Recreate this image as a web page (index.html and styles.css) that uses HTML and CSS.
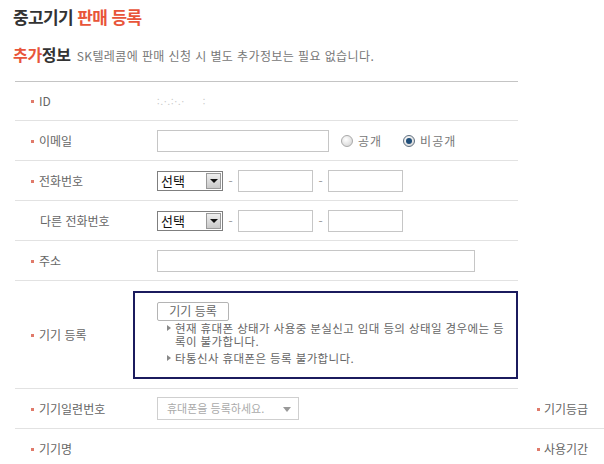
FILE: index.html
```html
<!DOCTYPE html>
<html lang="ko">
<head>
  <meta charset="UTF-8" />
  <title>중고기기 판매 등록</title>
  <link rel="stylesheet" href="styles.css">
</head>
<body>
  <div class="page">
    <h2 class="title">중고기기 <span class="hl">판매 등록</span></h2>
    <div class="sub">
      <h3><span class="hl">추가</span>정보</h3>
      <span class="note">SK텔레콤에 판매 신청 시 별도 추가정보는 필요 없습니다.</span>
    </div>

    <div class="form">
      <div class="row">
        <div class="label req">ID</div>
        <div class="value"><span class="masked">:.·.:·.·&nbsp;&nbsp;&nbsp;&nbsp;&nbsp;:</span></div>
      </div>
      <div class="row">
        <div class="label req">이메일</div>
        <div class="value">
          <span class="input w-email"></span>
          <span class="radio"></span><span class="radio-text">공개</span>
          <span class="radio on"></span><span class="radio-text">비공개</span>
        </div>
      </div>
      <div class="row">
        <div class="label req">전화번호</div>
        <div class="value">
          <span class="select">선택<span class="arrow"></span></span>
          <span class="dash">-</span>
          <span class="input w-tel"></span>
          <span class="dash">-</span>
          <span class="input w-tel"></span>
        </div>
      </div>
      <div class="row">
        <div class="label">다른 전화번호</div>
        <div class="value">
          <span class="select">선택<span class="arrow"></span></span>
          <span class="dash">-</span>
          <span class="input w-tel"></span>
          <span class="dash">-</span>
          <span class="input w-tel"></span>
        </div>
      </div>
      <div class="row">
        <div class="label req">주소</div>
        <div class="value"><span class="input w-addr"></span></div>
      </div>
      <div class="row row-device">
        <div class="label req">기기 등록</div>
        <div class="device-box">
          <button class="btn">기기 등록</button>
          <ul class="notice">
            <li>현재 휴대폰 상태가 사용중 분실신고 임대 등의 상태일 경우에는 등록이 불가합니다.</li>
            <li>타통신사 휴대폰은 등록 불가합니다.</li>
          </ul>
        </div>
      </div>
    </div>

    <div class="form wide">
      <div class="row">
        <div class="label req">기기일련번호</div>
        <div class="value grow">
          <span class="combo">휴대폰을 등록하세요.<span class="tri"></span></span>
        </div>
        <div class="label req side">기기등급</div>
      </div>
      <div class="row">
        <div class="label req">기기명</div>
        <div class="value grow"></div>
        <div class="label req side">사용기간</div>
      </div>
    </div>
  </div>
</body>
</html>
```

FILE: styles.css
```css
html, body {
  margin: 0;
  background: #fff;
  overflow: hidden;
}
body {
  font-family: "Noto Sans CJK KR", "Noto Sans", sans-serif;
  font-size: 12px;
  color: #666;
}
.page {
  padding: 5px 0 0 13px;
}
.hl { color: #e8553a; }

.title {
  margin: 0;
  font-size: 17px;
  line-height: 24px;
  font-weight: bold;
  color: #333;
  letter-spacing: -0.6px;
}
.sub {
  margin-top: 14px;
  display: flex;
  align-items: baseline;
  gap: 6px;
}
.sub h3 {
  margin: 0;
  font-size: 16px;
  line-height: 22px;
  font-weight: bold;
  color: #333;
  letter-spacing: -0.3px;
}
.note {
  font-size: 12px;
  color: #777;
  letter-spacing: 0.4px;
}

.form {
  margin: 16px 0 0 2px;
  width: 503px;
  border-top: 1px solid #c4c4c4;
}
.form.wide {
  margin-top: 0;
  width: auto;
  border-top: none;
}
.row {
  display: flex;
  align-items: center;
  height: 40px;
  border-bottom: 1px solid #e2e2e2;
  box-sizing: border-box;
}
.form .row:first-child { height: 39px; }
.form.wide .row:first-child { height: 40px; }

.label {
  width: 142px;
  flex: none;
  box-sizing: border-box;
  padding-left: 25px;
  color: #666;
  line-height: 16px;
  white-space: nowrap;
}
.label.req {
  position: relative;
  padding-left: 24px;
}
.label.req::before {
  content: "";
  position: absolute;
  left: 16px;
  top: 7px;
  width: 3px;
  height: 3px;
  background: #e07a6a;
}
.label.side {
  width: 67px;
  padding-left: 7px;
}
.label.side::before { left: 0; }

.value {
  display: flex;
  align-items: center;
}
.value.grow { flex: 1; }
.masked {
  font-size: 9px;
  color: #c8c8c8;
  letter-spacing: 1px;
}

.input {
  display: inline-block;
  height: 22px;
  box-sizing: border-box;
  border: 1px solid #c6c6c6;
  background: #fff;
}
.w-email { width: 172px; }
.w-tel { width: 75px; }
.w-addr { width: 318px; }

.radio {
  width: 12px;
  height: 12px;
  border-radius: 50%;
  box-sizing: border-box;
  border: 1px solid #a9a9a9;
  background: radial-gradient(circle at 40% 35%, #fff, #cfcfcf);
  margin-left: 12px;
  position: relative;
}
.radio.on {
  margin-left: 21px;
  border-color: #5f6f80;
}
.radio.on::after {
  content: "";
  position: absolute;
  left: 2px;
  top: 2px;
  width: 6px;
  height: 6px;
  border-radius: 50%;
  background: #1f4e79;
}
.radio-text {
  margin-left: 5px;
  color: #777;
  letter-spacing: 1px;
}

.select {
  position: relative;
  width: 66px;
  height: 20px;
  box-sizing: border-box;
  border: 1px solid #7f7f7f;
  padding-left: 3px;
  font-size: 13px;
  line-height: 18px;
  color: #111;
}
.select .arrow {
  position: absolute;
  right: 1px;
  top: 1px;
  width: 15px;
  height: 16px;
  box-sizing: border-box;
  border: 1px solid #999;
  background: linear-gradient(#eee, #c9c9c9);
}
.select .arrow::after {
  content: "";
  position: absolute;
  left: 3px;
  top: 5px;
  border-left: 4px solid transparent;
  border-right: 4px solid transparent;
  border-top: 4px solid #111;
}
.dash {
  width: 15px;
  text-align: center;
  color: #999;
}

.row-device {
  height: 108px;
}
.row-device .label {
  width: 118px;
}
.device-box {
  width: 386px;
  height: 88px;
  box-sizing: border-box;
  border: 2px solid #1b1b5e;
  padding: 9px 4px 0 22px;
}
.btn {
  display: block;
  width: 72px;
  height: 19px;
  padding: 0;
  border: 1px solid #b4b4b4;
  border-radius: 2px;
  background: #fff;
  font-family: inherit;
  font-size: 12px;
  line-height: 16px;
  color: #666;
}
.notice {
  list-style: none;
  margin: 1px 0 0;
  padding: 0 0 0 18px;
  font-size: 11.5px;
  line-height: 13px;
  color: #666;
}
.notice li {
  position: relative;
  margin-bottom: 4px;
  letter-spacing: 0.4px;
}
.notice li::before {
  content: "";
  position: absolute;
  left: -8px;
  top: 3px;
  border-top: 3px solid transparent;
  border-bottom: 3px solid transparent;
  border-left: 4px solid #888;
}

.combo {
  position: relative;
  display: inline-block;
  width: 142px;
  height: 23px;
  box-sizing: border-box;
  border: 1px solid #cfcfcf;
  padding-left: 9px;
  font-size: 11px;
  line-height: 21px;
  color: #aaa;
}
.combo .tri {
  position: absolute;
  right: 7px;
  top: 9px;
  border-left: 4px solid transparent;
  border-right: 4px solid transparent;
  border-top: 5px solid #999;
}
```
